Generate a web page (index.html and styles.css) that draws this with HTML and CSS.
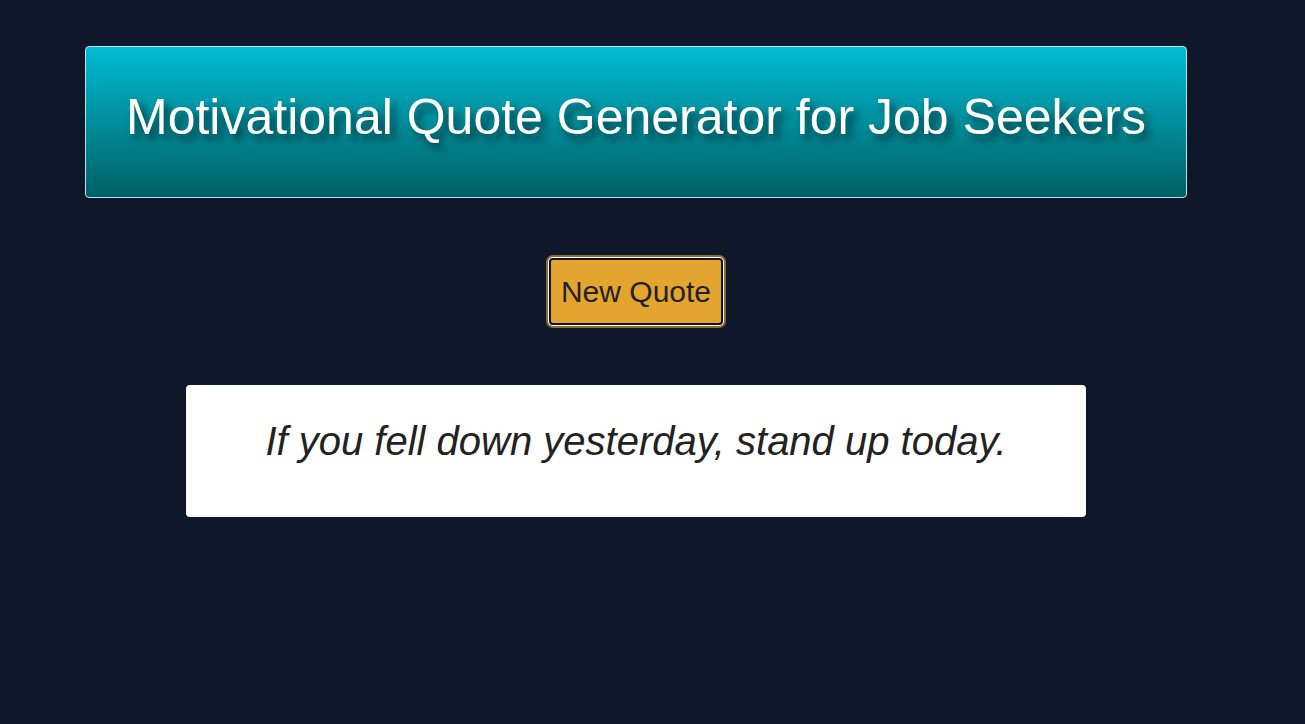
FILE: index.html
```html
<!DOCTYPE html>
<html lang="en">
<head>
<meta charset="utf-8">
<title>Motivational Quote Generator for Job Seekers</title>
<link rel="stylesheet" href="styles.css">
</head>
<body>
<div class="container">
  <header class="banner">
    <h1 class="title">Motivational Quote Generator for Job Seekers</h1>
  </header>
  <div class="actions">
    <button class="quote-btn" type="button">New Quote</button>
  </div>
  <div class="quote-box">
    <p class="quote-text">If you fell down yesterday, stand up today.</p>
  </div>
</div>
</body>
</html>
```

FILE: styles.css
```css
html, body {
  margin: 0;
  padding: 0;
  background: #0f172a;
  font-family: "Liberation Sans", Arial, sans-serif;
}

.container {
  width: 1102px;
  margin-left: 85px;
  padding-top: 46px;
  display: flex;
  flex-direction: column;
  align-items: center;
}

.banner {
  box-sizing: border-box;
  width: 100%;
  height: 152px;
  border: 1px solid #b9e6ea;
  border-radius: 4px;
  background: linear-gradient(to bottom, #00bcd4, #006064);
  display: flex;
  justify-content: center;
  padding-top: 42px;
}

.title {
  margin: 0;
  color: #ffffff;
  font-size: 50px;
  font-weight: normal;
  line-height: 57px;
  text-shadow: 5px 6px 8px rgba(0, 0, 0, 0.6);
}

.actions {
  margin-top: 60px;
  display: flex;
  justify-content: center;
}

.quote-btn {
  font-family: "Liberation Sans", Arial, sans-serif;
  font-size: 30px;
  line-height: 34px;
  color: #222222;
  background: #e3a530;
  border: 2px solid #111111;
  border-radius: 4px;
  padding: 15px 10px 14px;
  box-shadow: 0 0 0 1px #ffffff, 0 0 0 3px #8a6d30;
  cursor: pointer;
}

.quote-box {
  box-sizing: border-box;
  margin-top: 60px;
  width: 900px;
  height: 132px;
  background: #ffffff;
  border-radius: 4px;
  padding: 33px 20px 0;
  text-align: center;
}

.quote-text {
  margin: 0;
  font-size: 40px;
  line-height: 46px;
  font-style: italic;
  color: #222222;
}
```
